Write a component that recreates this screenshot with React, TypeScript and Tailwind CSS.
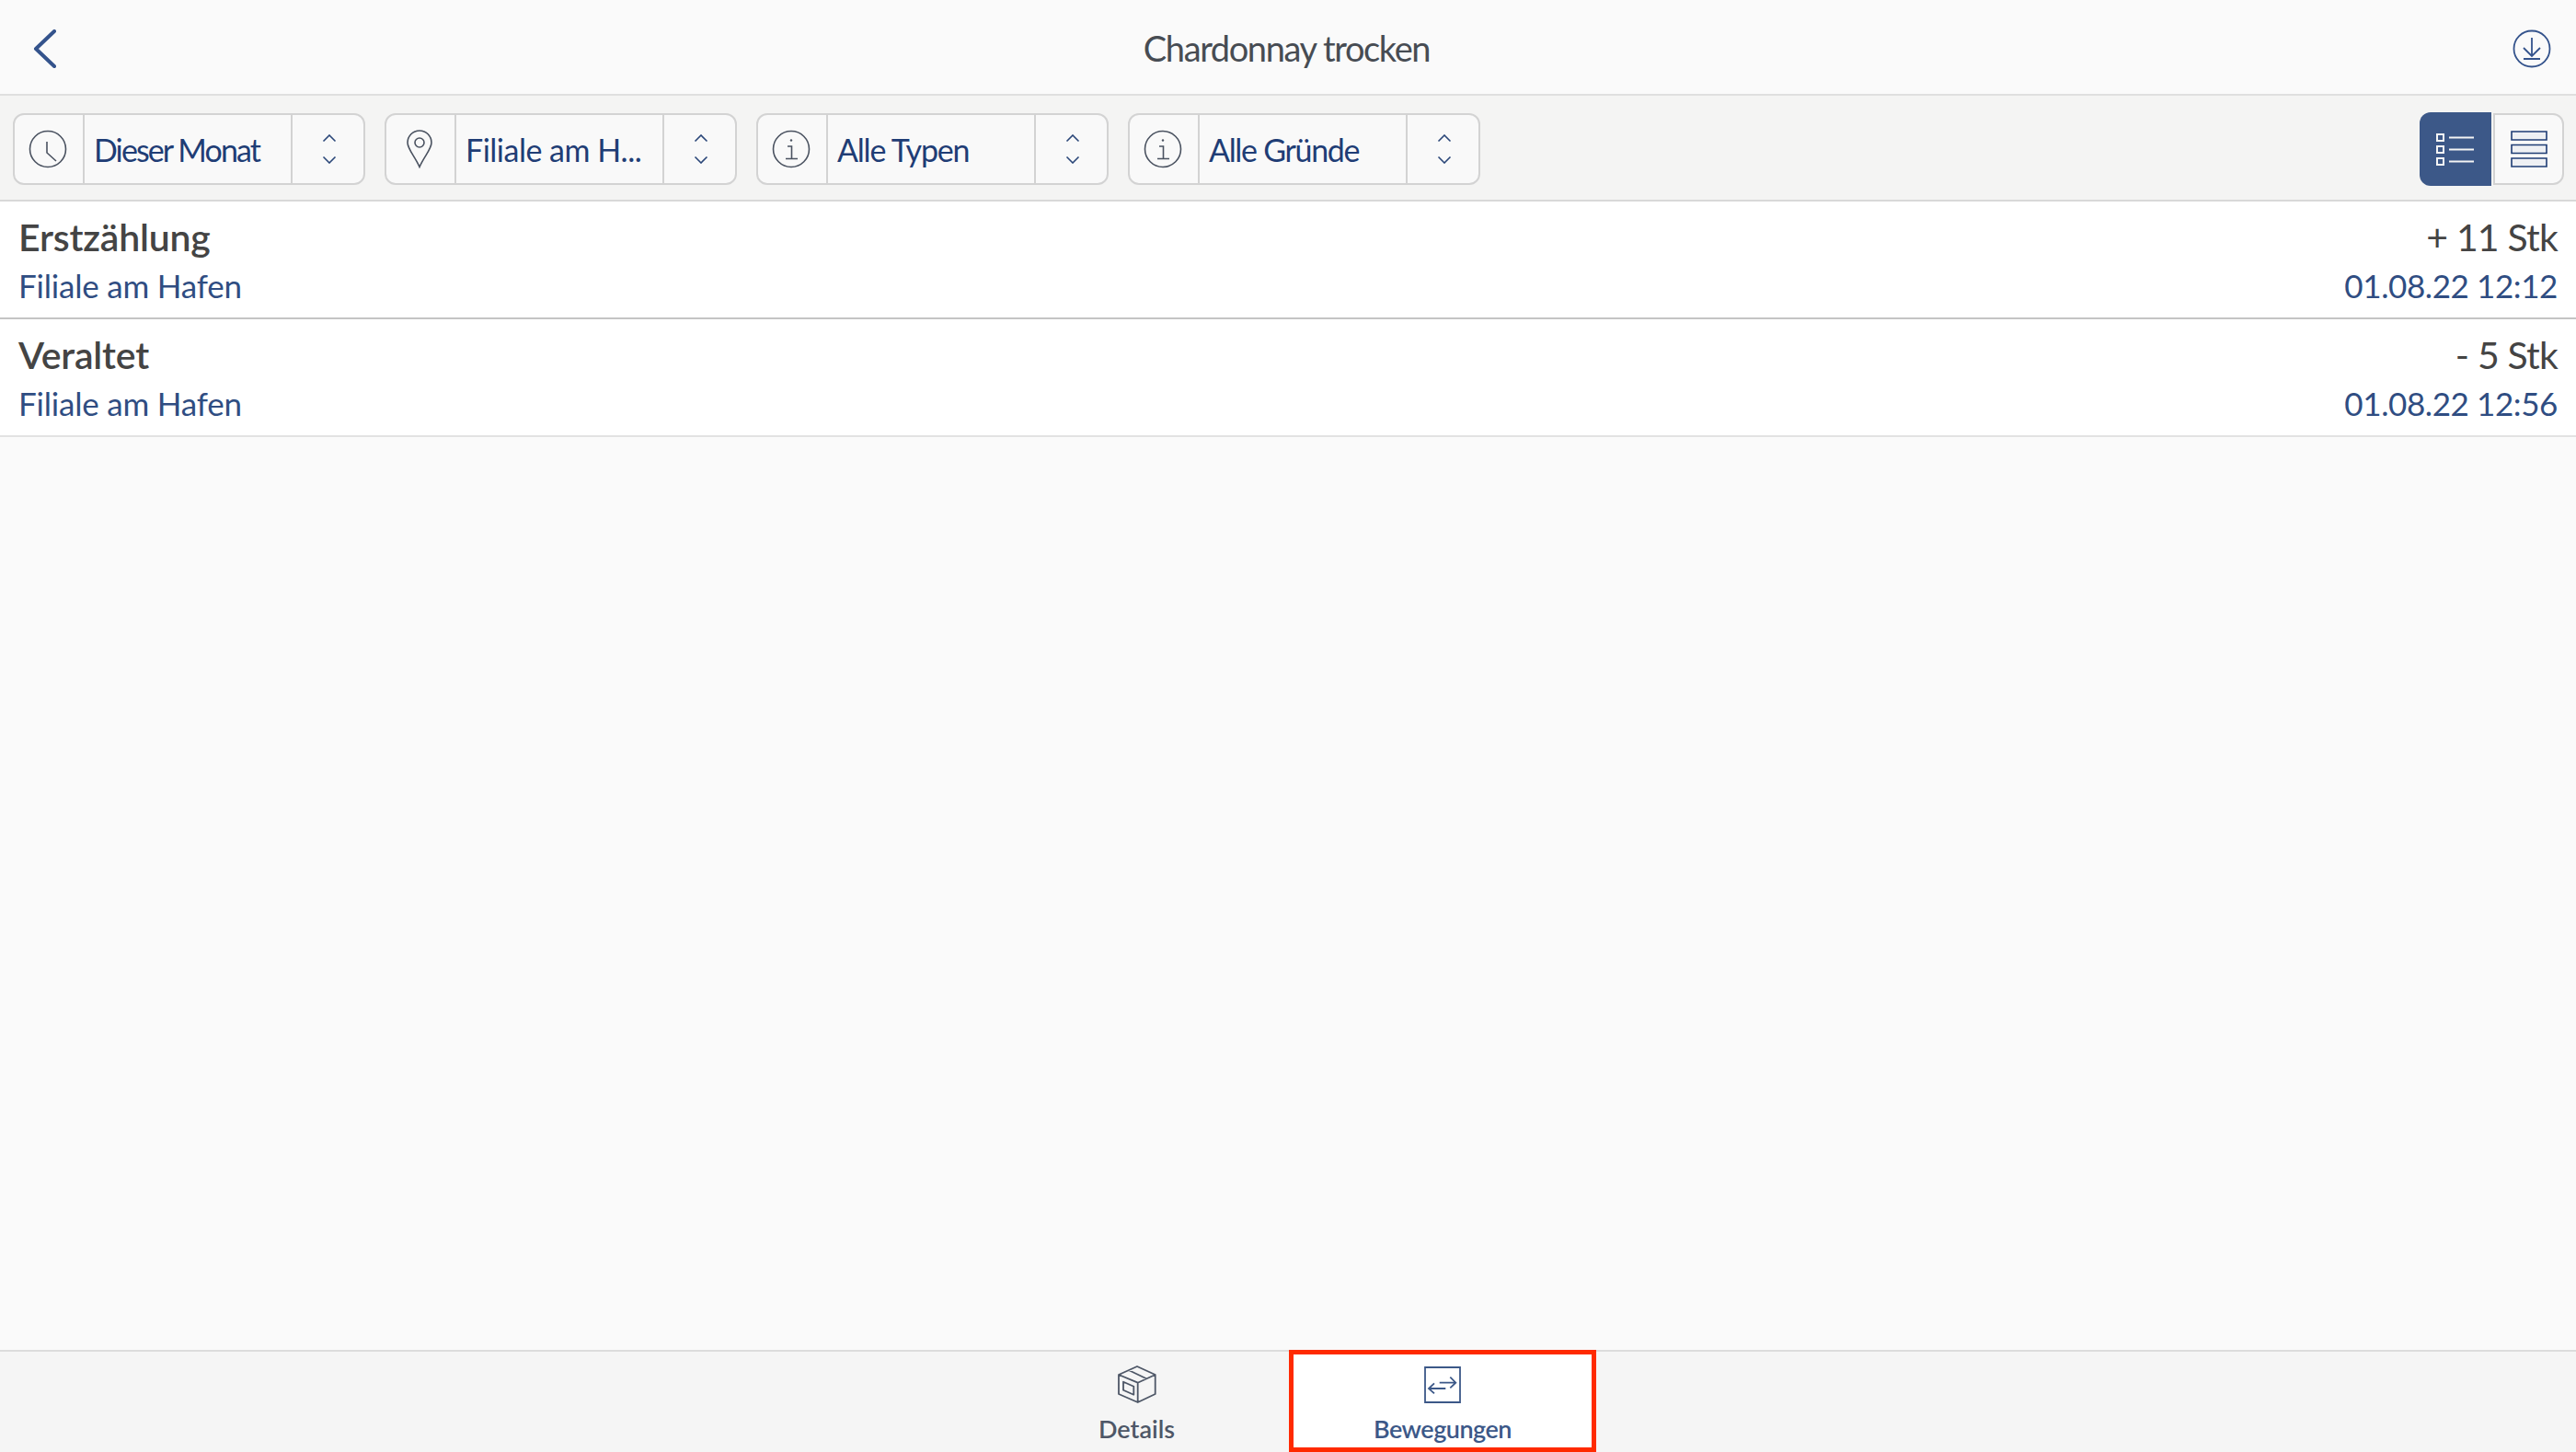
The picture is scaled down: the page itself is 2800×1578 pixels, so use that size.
import React from "react";

const font = "font-['Lato','Liberation_Sans',sans-serif]";

function ClockIcon() {
  return (
    <svg width="42" height="42" viewBox="0 0 42 42" fill="none" stroke="#4a5260" strokeWidth="1.6">
      <circle cx="21" cy="21" r="19.5" />
      <path d="M20 13v12l10 9" />
    </svg>
  );
}

function PinIcon() {
  return (
    <svg width="30" height="42" viewBox="0 0 30 42" fill="none" stroke="#4a5260" strokeWidth="1.6">
      <path d="M15 40.500C10 29 2 21 2 14a13 13 0 0 1 26 0c0 7-8 15-13 26.500z" />
      <circle cx="15" cy="14" r="5" />
    </svg>
  );
}

function InfoIcon() {
  return (
    <svg width="42" height="42" viewBox="0 0 42 42" fill="none" stroke="#4a5260" strokeWidth="1.6">
      <circle cx="21" cy="21" r="19.5" />
      <path d="M17 18h4.500v13M15 31.500h13" />
      <circle cx="21" cy="11.500" r="1.2" fill="#4a5260" stroke="none" />
    </svg>
  );
}

function UpDown() {
  return (
    <svg width="16" height="32" viewBox="0 0 16 32" fill="none" stroke="#2a4678" strokeWidth="1.6">
      <path d="M1.500 7.500 8 1l6.500 6.500M1.500 24.500 8 31l6.500-6.500" />
    </svg>
  );
}

function FilterSelect({ icon, label, tracking }: { icon: React.ReactNode; label: string; tracking: string }) {
  return (
    <div className="flex h-[78px] w-[383px] rounded-xl border-2 border-[#d3d3d3] bg-[#f9f9f9]">
      <div className="flex w-[76px] items-center justify-center border-r-2 border-[#d3d3d3] pr-[2px]">{icon}</div>
      <div className={`flex w-[224px] items-center pl-[10px] text-[34px] text-[#1f3d75] ${tracking} ${font}`}>{label}</div>
      <div className="flex flex-1 items-center justify-center border-l-2 border-[#d3d3d3] pl-[2px]">
        <UpDown />
      </div>
    </div>
  );
}

function MovementRow({ title, qty, date }: { title: string; qty: string; date: string }) {
  return (
    <div className={`flex h-[128px] justify-between border-b-2 border-[#c4c4c4] bg-white px-[20px] pt-[14px] last:border-[#e2e2e2] ${font}`}>
      <div>
        <div className="text-[41px] leading-[50px] font-semibold tracking-[-0.2px] text-[#444444]">{title}</div>
        <div className="mt-[2px] text-[35px] leading-[50px] tracking-[-0.2px] text-[#2f4d82]">Filiale am Hafen</div>
      </div>
      <div className="text-right">
        <div className="text-[41px] leading-[50px] tracking-[-0.8px] text-[#444444]">{qty}</div>
        <div className="mt-[2px] text-[35px] leading-[50px] tracking-[-0.4px] text-[#2f4d82]">{date}</div>
      </div>
    </div>
  );
}

export default function App() {
  return (
    <div className="flex h-[1578px] w-[2800px] flex-col overflow-hidden bg-[#fafafa]">
      {/* header */}
      <div className="flex h-[104px] items-center justify-between border-b-2 border-[#dfdfdf] pt-[3px] pr-[27px] pl-[36px]">
        <svg width="26" height="42" viewBox="0 0 26 42" fill="none" stroke="#34538c" strokeWidth="4" strokeLinecap="round" strokeLinejoin="round">
          <path d="M23 2 3 21l20 19" />
        </svg>
        <div className={`pl-[4px] text-[38px] tracking-[-1.4px] text-[#474c53] ${font}`}>Chardonnay trocken</div>
        <svg width="42" height="42" viewBox="0 0 42 42" fill="none" stroke="#34538c" strokeWidth="1.8">
          <circle cx="21" cy="21" r="19.500" />
          <path d="M21 9v20M12 20l9 9 9-9M12 32h18" />
        </svg>
      </div>

      {/* filter bar */}
      <div className="flex h-[115px] items-center justify-between border-b-2 border-[#d8d8d8] bg-[#f4f4f3] pt-[3px] pr-[13px] pl-[14px]">
        <div className="flex gap-[21px]">
          <FilterSelect icon={<ClockIcon />} label="Dieser Monat" tracking="tracking-[-1.9px]" />
          <FilterSelect icon={<PinIcon />} label="Filiale am H..." tracking="tracking-[-0.5px]" />
          <FilterSelect icon={<InfoIcon />} label="Alle Typen" tracking="tracking-[-1.2px]" />
          <FilterSelect icon={<InfoIcon />} label="Alle Gründe" tracking="tracking-[-1.3px]" />
        </div>
        <div className="flex items-center gap-[2px]">
          <div className="flex h-[80px] w-[78px] items-center justify-center rounded-l-xl bg-[#3c5888]">
            <svg width="42" height="36" viewBox="0 0 42 36" fill="none" stroke="#f4f4f4" strokeWidth="2">
              <path d="M1 2h7v7H1zM1 15h7v7H1zM1 28h7v7H1zM14 5.500h27M14 18.500h27M14 31.500h27" />
            </svg>
          </div>
          <div className="flex h-[78px] w-[77px] items-center justify-center rounded-r-xl border-2 border-[#d3d3d3] bg-[#f9f9f9]">
            <svg width="40" height="40" viewBox="0 0 40 40" fill="#eef0f4" stroke="#1f3d75" strokeWidth="1.6">
              <path d="M1 1h38v9H1zM1 15.500h38v9H1zM1 30h38v9H1z" />
            </svg>
          </div>
        </div>
      </div>

      {/* list */}
      <div className="flex-1">
        <MovementRow title="Erstzählung" qty="+ 11 Stk" date="01.08.22 12:12" />
        <MovementRow title="Veraltet" qty="- 5 Stk" date="01.08.22 12:56" />
      </div>

      {/* tab bar */}
      <div className={`flex h-[111px] justify-center border-t-2 border-[#dcdcdc] bg-[#f5f5f5] pl-[2px] ${font}`}>
        <div className="flex w-[334px] flex-col items-center pt-[15px] pl-[3px]">
          <svg width="42" height="42" viewBox="0 0 42 42" fill="none" stroke="#4e5767" strokeWidth="1.8" strokeLinejoin="round">
            <path d="M21 1 40.700 10v21L21.700 40 1 31V10zM1 10l20.700 8.700L40.700 10M21.700 18.700V40M12.300 5.300 31 14.300M6 17.700l11.300 5v9L6 26.700z" />
          </svg>
          <div className="mt-[9px] text-[27px] leading-[36px] font-semibold text-[#4e5767]">Details</div>
        </div>
        <div className="-mt-[2px] flex w-[334px] flex-col items-center border-[5px] border-[#ff2a00] bg-white pt-[12px]">
          <svg width="42" height="42" viewBox="0 0 42 42" fill="none" stroke="#3c5888" strokeWidth="1.8">
            <path d="M2 2h38v38H2zM17.700 18.700h17.600M29.300 12.700l6 6-6 5.600M24.300 25H6M12 19.300 6 25l6 5.300" />
          </svg>
          <div className="mt-[9px] text-[27px] leading-[36px] font-semibold tracking-[-0.5px] text-[#3c5888]">Bewegungen</div>
        </div>
      </div>
    </div>
  );
}
